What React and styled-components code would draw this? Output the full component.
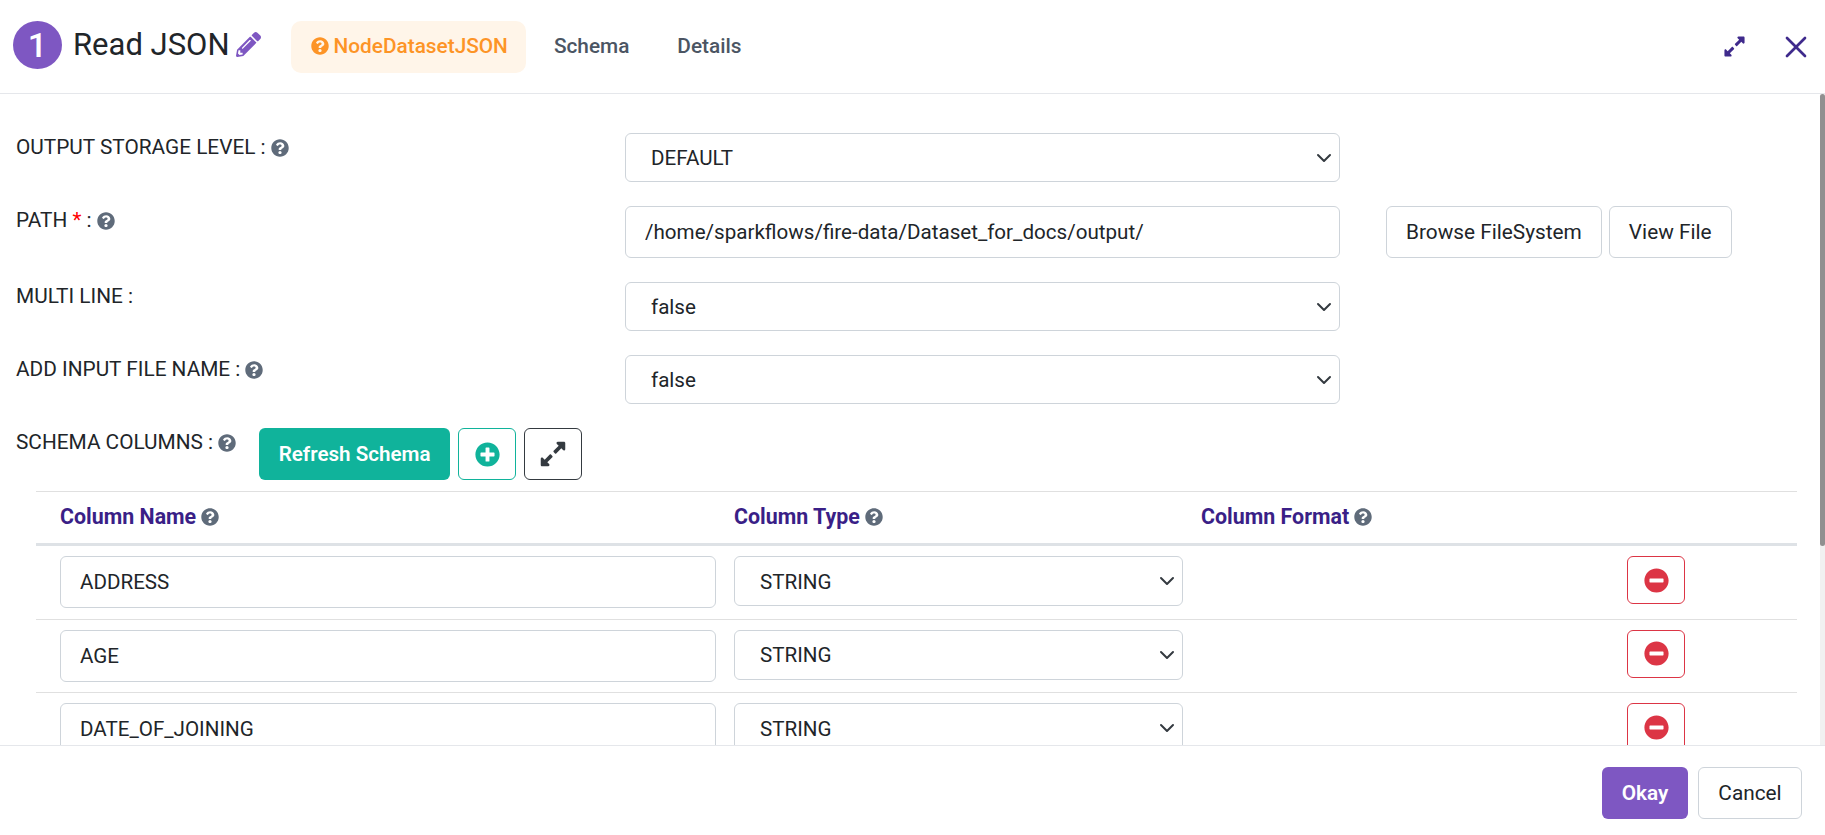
import React from "react";
import styled, { createGlobalStyle } from "styled-components";
import {
  FaQuestionCircle,
  FaPencilAlt,
  FaPlusCircle,
  FaMinusCircle,
  FaExpandAlt,
} from "react-icons/fa";
import { X } from "lucide-react";

const chevron =
  "data:image/svg+xml,%3csvg xmlns='http://www.w3.org/2000/svg' viewBox='0 0 16 16'%3e%3cpath fill='none' stroke='%23343a40' stroke-linecap='round' stroke-linejoin='round' stroke-width='2' d='m2 5 6 6 6-6'/%3e%3c/svg%3e";

const GlobalStyle = createGlobalStyle`
  html, body {
    margin: 0;
    height: 100%;
    background: #fff;
    overflow: hidden;
  }
  body, input, select, button {
    font-family: Roboto, "Liberation Sans", sans-serif;
  }
  * {
    box-sizing: border-box;
  }
`;

const Modal = styled.div`
  display: flex;
  flex-direction: column;
  width: 1825px;
  height: 835px;
  background: #fff;
  color: #212529;
`;

const Header = styled.header`
  display: flex;
  align-items: center;
  flex: none;
  height: 94px;
  padding: 0 11px 0 13px;
  border-bottom: 1px solid #e5e7eb;
`;

const StepBadge = styled.span`
  display: flex;
  align-items: center;
  justify-content: center;
  width: 49px;
  height: 48px;
  margin-bottom: 4px;
  border-radius: 50%;
  background: #7e57c2;
  color: #fff;
  font-size: 34px;
  font-weight: 500;
`;

const Title = styled.h1`
  margin: 0 0 4px 11px;
  font-size: 31px;
  font-weight: 400;
  line-height: 1;
  color: #212529;
`;

const EditIcon = styled(FaPencilAlt)`
  width: 25px;
  height: 25px;
  margin: 0 0 4px 6px;
  color: #7e57c2;
`;

const Tabs = styled.nav`
  display: flex;
  align-items: center;
  margin-left: 30px;
`;

const Tab = styled.span`
  display: flex;
  align-items: center;
  gap: 5px;
  height: 52px;
  padding: 0 ${(p) => (p.$active ? "18px" : "20px")} 2px 20px;
  margin-right: 8px;
  border-radius: 10px;
  background: ${(p) => (p.$active ? "#fff5e9" : "transparent")};
  color: ${(p) => (p.$active ? "#fd9426" : "#4b5563")};
  font-size: 20.8px;
  font-weight: 500;
  svg {
    width: 18px;
    height: 18px;
  }
`;

const HeaderActions = styled.div`
  display: flex;
  align-items: center;
  gap: 32px;
  margin-left: auto;
  color: #3f2a8c;
`;

const ExpandIcon = styled(FaExpandAlt)`
  width: 23px;
  height: 23px;
`;

const ScrollArea = styled.div`
  position: relative;
  flex: 1;
  min-height: 0;
  overflow: hidden;
`;

const ScrollTrack = styled.div`
  position: absolute;
  top: 0;
  right: 0;
  bottom: 0;
  width: 5px;
  background: #f1f1f1;
`;

const ScrollThumb = styled.div`
  height: 452px;
  border-radius: 5px;
  background: #909090;
`;

const Content = styled.main`
  padding: 39px 28px 0 16px;
`;

const FormRow = styled.div`
  display: flex;
  align-items: flex-start;
  margin-bottom: 24px;
`;

const Label = styled.label`
  display: flex;
  align-items: center;
  gap: 5px;
  flex: none;
  width: 609px;
  padding-top: 1px;
  font-size: 20.8px;
  line-height: 27px;
  color: #212529;
`;

const Required = styled.span`
  color: #f00;
`;

const Hint = styled(FaQuestionCircle)`
  flex: none;
  width: 18px;
  height: 18px;
  color: #5f6b7a;
`;

const Field = styled.div`
  flex: none;
  width: 715px;
`;

const Select = styled.select`
  display: block;
  width: 100%;
  height: ${(p) => p.$height || "49px"};
  padding: 1px 36px 0 ${(p) => p.$inset || "25px"};
  border: 1px solid #ced4da;
  border-radius: 6px;
  appearance: none;
  background: #fff url("${chevron}") no-repeat right 7px center / 16px 16px;
  font-size: 20.6px;
  color: #212529;
`;

const TextInput = styled.input`
  display: block;
  width: 100%;
  height: 52px;
  padding: 0 19px;
  border: 1px solid #ced4da;
  border-radius: 6px;
  background: #fff;
  font-size: 20.6px;
  color: #212529;
`;

const PathActions = styled.div`
  display: flex;
  gap: 7px;
  margin-left: 46px;
`;

const OutlineButton = styled.button`
  height: 52px;
  padding: 0 19px;
  border: 1px solid #ced4da;
  border-radius: 6px;
  background: #fff;
  font-size: 20.8px;
  color: #212529;
`;

const SchemaBar = styled.div`
  display: flex;
  align-items: flex-start;
  gap: 8px;
  height: 52px;
`;

const SchemaLabel = styled(Label)`
  width: auto;
  margin-right: 15px;
`;

const RefreshButton = styled.button`
  width: 191px;
  height: 52px;
  padding: 0;
  border: 0;
  border-radius: 6px;
  background: #10b39b;
  color: #fff;
  font-size: 20.6px;
  font-weight: 600;
`;

const IconButton = styled.button`
  display: flex;
  align-items: center;
  justify-content: center;
  width: 58px;
  height: ${(p) => p.$height || "52px"};
  padding: 0;
  border: 1px solid ${(p) => p.$color};
  border-radius: 6px;
  background: #fff;
  color: ${(p) => p.$color};
  svg {
    width: ${(p) => p.$icon || "25px"};
    height: ${(p) => p.$icon || "25px"};
  }
`;

const Table = styled.div`
  margin: 11px 0 0 20px;
  border-top: 1px solid #e0e0e0;
`;

const columns = "674px 467px 426px 1fr";

const HeadRow = styled.div`
  display: grid;
  grid-template-columns: ${columns};
  align-items: center;
  height: 54px;
  padding: 0 0 2px 24px;
  border-bottom: 3px solid #dee2e6;
`;

const HeadCell = styled.span`
  display: flex;
  align-items: center;
  gap: 5px;
  font-size: 21.4px;
  font-weight: 700;
  color: #3a1f87;
`;

const Row = styled.div`
  display: grid;
  grid-template-columns: ${columns};
  align-items: start;
  height: 73.5px;
  padding: 10px 0 0 24px;
  border-bottom: 1px solid #e0e0e0;
`;

const NameCell = styled.div`
  width: 656px;
`;

const TypeCell = styled.div`
  width: 449px;
`;

const DeleteCell = styled.div`
  grid-column: 4;
`;

const Footer = styled.footer`
  display: flex;
  justify-content: flex-end;
  align-items: flex-start;
  gap: 10px;
  flex: none;
  height: 90px;
  padding: 21px 23px 0 0;
  border-top: 1px solid #e5e7eb;
`;

const OkayButton = styled.button`
  width: 86px;
  height: 52px;
  border: 0;
  border-radius: 6px;
  background: #7e57c2;
  color: #fff;
  font-size: 20.8px;
  font-weight: 600;
`;

const CancelButton = styled(OutlineButton)`
  width: 104px;
  padding: 0;
`;

const schemaRows = ["ADDRESS", "AGE", "DATE_OF_JOINING"];

export default function App() {
  return (
    <>
      <GlobalStyle />
      <Modal>
        <Header>
          <StepBadge>1</StepBadge>
          <Title>Read JSON</Title>
          <EditIcon />
          <Tabs>
            <Tab $active>
              <FaQuestionCircle />
              NodeDatasetJSON
            </Tab>
            <Tab>Schema</Tab>
            <Tab>Details</Tab>
          </Tabs>
          <HeaderActions>
            <ExpandIcon />
            <X size={36} strokeWidth={1.8} />
          </HeaderActions>
        </Header>

        <ScrollArea>
          <Content>
            <FormRow>
              <Label>
                OUTPUT STORAGE LEVEL : <Hint />
              </Label>
              <Field>
                <Select defaultValue="DEFAULT">
                  <option>DEFAULT</option>
                </Select>
              </Field>
            </FormRow>

            <FormRow>
              <Label>
                <span>
                  PATH <Required>*</Required> :
                </span>
                <Hint />
              </Label>
              <Field>
                <TextInput
                  readOnly
                  value="/home/sparkflows/fire-data/Dataset_for_docs/output/"
                />
              </Field>
              <PathActions>
                <OutlineButton>Browse FileSystem</OutlineButton>
                <OutlineButton>View File</OutlineButton>
              </PathActions>
            </FormRow>

            <FormRow>
              <Label>MULTI LINE :</Label>
              <Field>
                <Select defaultValue="false">
                  <option>false</option>
                </Select>
              </Field>
            </FormRow>

            <FormRow>
              <Label>
                ADD INPUT FILE NAME : <Hint />
              </Label>
              <Field>
                <Select defaultValue="false">
                  <option>false</option>
                </Select>
              </Field>
            </FormRow>

            <SchemaBar>
              <SchemaLabel>
                SCHEMA COLUMNS : <Hint />
              </SchemaLabel>
              <RefreshButton>Refresh Schema</RefreshButton>
              <IconButton $color="#10b39b">
                <FaPlusCircle />
              </IconButton>
              <IconButton $color="#343a40" $icon="28px">
                <FaExpandAlt />
              </IconButton>
            </SchemaBar>

            <Table>
              <HeadRow>
                <HeadCell>
                  Column Name <Hint />
                </HeadCell>
                <HeadCell>
                  Column Type <Hint />
                </HeadCell>
                <HeadCell>
                  Column Format <Hint />
                </HeadCell>
              </HeadRow>
              {schemaRows.map((name) => (
                <Row key={name}>
                  <NameCell>
                    <TextInput readOnly value={name} />
                  </NameCell>
                  <TypeCell>
                    <Select $height="50px" defaultValue="STRING">
                      <option>STRING</option>
                    </Select>
                  </TypeCell>
                  <DeleteCell>
                    <IconButton $color="#dc3545" $height="48px">
                      <FaMinusCircle />
                    </IconButton>
                  </DeleteCell>
                </Row>
              ))}
            </Table>
          </Content>
          <ScrollTrack>
            <ScrollThumb />
          </ScrollTrack>
        </ScrollArea>

        <Footer>
          <OkayButton>Okay</OkayButton>
          <CancelButton>Cancel</CancelButton>
        </Footer>
      </Modal>
    </>
  );
}
